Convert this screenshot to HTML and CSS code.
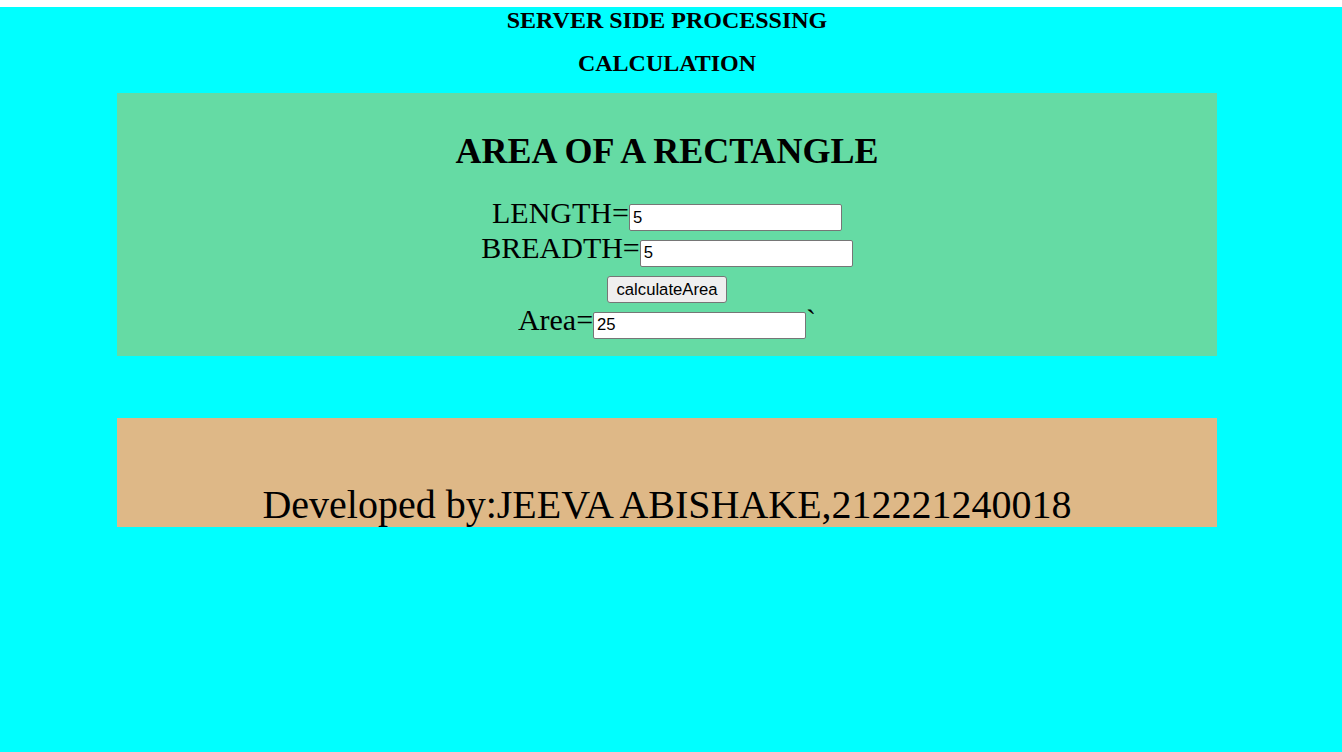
FILE: index.html
```html
<!DOCTYPE html>
<html>
<head>
<meta charset="utf-8">
<title>Area of a Rectangle</title>
<link rel="stylesheet" href="styles.css">
</head>
<body>
<div class="page">
  <h3 class="top-title">SERVER SIDE PROCESSING</h3>
  <h3 class="top-title second">CALCULATION</h3>
  <div class="card">
    <h1 class="card-title">AREA OF A RECTANGLE</h1>
    <form class="calc-form">
      <div class="row">LENGTH=<input class="field" type="text" value="5"></div>
      <div class="row">BREADTH=<input class="field" type="text" value="5"></div>
      <div class="button-row"><button class="calc-btn" type="button">calculateArea</button></div>
      <div class="row">Area=<input class="field" type="text" value="25">`</div>
    </form>
  </div>
  <div class="footer">Developed by:JEEVA ABISHAKE,212221240018</div>
</div>
</body>
</html>
```
FILE: styles.css
```css
html {
  background: #ffffff;
}
body {
  margin: 0;
  font-family: "Liberation Serif", "Times New Roman", serif;
  color: #000;
}
.page {
  margin-top: 7px;
  min-height: 745px;
  background: #00ffff;
  padding: 0 8px 0 0;
  box-sizing: border-box;
  overflow: hidden;
}
.top-title {
  margin: 0;
  font-size: 24px;
  line-height: 27px;
  font-weight: bold;
  text-align: center;
}
.top-title.second {
  margin-top: 15.5px;
}
.card {
  width: 1100px;
  margin: 16.6px auto 0;
  background: #65dba4;
  padding: 37.6px 0 17px;
  box-sizing: border-box;
  text-align: center;
}
.card-title {
  margin: 0;
  font-size: 36px;
  line-height: 40px;
  font-weight: bold;
}
.calc-form {
  margin: 25px 0 0;
}
.row {
  font-size: 30px;
  line-height: normal;
}
.field {
  box-sizing: border-box;
  width: 213px;
  height: 27px;
  padding: 1px 3px;
  margin: 0;
  border: 1px solid #767676;
  border-radius: 2px;
  background: #fff;
  font-family: "Liberation Sans", Arial, sans-serif;
  font-size: 16.67px;
  color: #000;
  vertical-align: baseline;
}
.button-row {
  display: flex;
  justify-content: center;
  padding-top: 9.4px;
}
.calc-btn {
  box-sizing: border-box;
  width: 120px;
  height: 27px;
  padding: 0;
  margin: 0;
  border: 1px solid #767676;
  border-radius: 3px;
  background: #efefef;
  font-family: "Liberation Sans", Arial, sans-serif;
  font-size: 16.67px;
  color: #000;
}
.footer {
  width: 1100px;
  margin: 62.4px auto 0;
  background: #deb887;
  padding-top: 64px;
  font-size: 40px;
  line-height: 45px;
  text-align: center;
}
```
